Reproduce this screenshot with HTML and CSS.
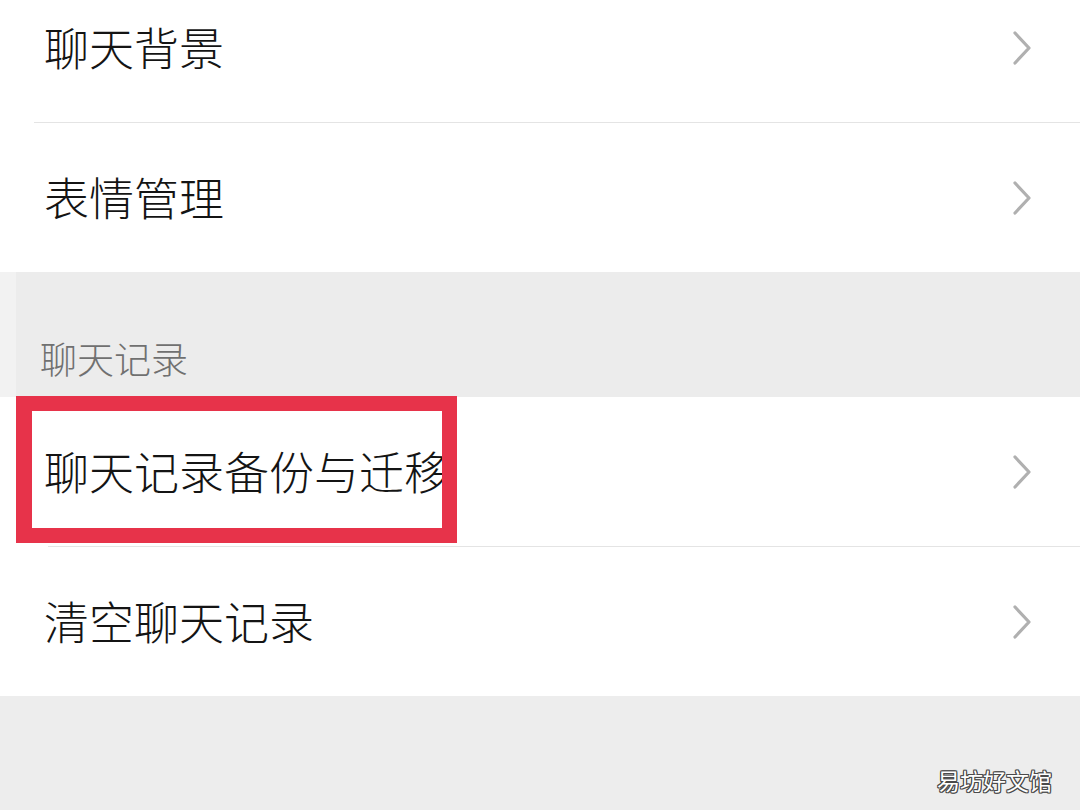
FILE: index.html
```html
<!DOCTYPE html>
<html lang="zh-CN">
<head>
<meta charset="utf-8">
<title>聊天设置</title>
<link rel="stylesheet" href="styles.css">
</head>
<body>
<div class="page">
  <div class="group first">
    <div class="row">
      <span class="label">聊天背景</span>
      <svg class="chev" width="20" height="36" viewBox="0 0 20 36"><polyline points="3,3 17,18 3,33" fill="none" stroke="#b0b0b0" stroke-width="3.2" stroke-linecap="round" stroke-linejoin="round"/></svg>
    </div>
    <div class="divider"></div>
    <div class="row">
      <span class="label">表情管理</span>
      <svg class="chev" width="20" height="36" viewBox="0 0 20 36"><polyline points="3,3 17,18 3,33" fill="none" stroke="#b0b0b0" stroke-width="3.2" stroke-linecap="round" stroke-linejoin="round"/></svg>
    </div>
  </div>
  <div class="section-head">聊天记录</div>
  <div class="group">
    <div class="row highlighted">
      <span class="label">聊天记录备份与迁移</span>
      <svg class="chev" width="20" height="36" viewBox="0 0 20 36"><polyline points="3,3 17,18 3,33" fill="none" stroke="#b0b0b0" stroke-width="3.2" stroke-linecap="round" stroke-linejoin="round"/></svg>
      <div class="redbox"></div>
    </div>
    <div class="divider d2"></div>
    <div class="row">
      <span class="label">清空聊天记录</span>
      <svg class="chev" width="20" height="36" viewBox="0 0 20 36"><polyline points="3,3 17,18 3,33" fill="none" stroke="#b0b0b0" stroke-width="3.2" stroke-linecap="round" stroke-linejoin="round"/></svg>
    </div>
  </div>
  <div class="footer">
    <span class="watermark">易坊好文馆</span>
  </div>
</div>
</body>
</html>
```
FILE: styles.css
```css
html, body {
  margin: 0;
  padding: 0;
  background: #ededed;
}
body {
  width: 1080px;
  height: 810px;
  overflow: hidden;
  font-family: "Noto Sans CJK SC", "Noto Sans", sans-serif;
}
.page {
  display: flex;
  flex-direction: column;
}
.group {
  background: #ffffff;
}
.group.first {
  margin-top: -27px;
}
.row {
  position: relative;
  height: 149px;
  display: flex;
  align-items: center;
  justify-content: space-between;
  padding: 0 48px 0 44px;
}
.label {
  font-size: 45px;
  font-weight: 300;
  color: #141414;
  line-height: 1;
  position: relative;
  top: -1px;
}
.chev {
  flex: none;
}
.divider {
  height: 1px;
  margin-left: 34px;
  background: #e4e4e4;
}
.divider.d2 {
  margin-left: 48px;
}
.section-head {
  height: 125px;
  box-sizing: border-box;
  padding: 0 0 20px 40px;
  display: flex;
  align-items: flex-end;
  font-size: 37px;
  font-weight: 300;
  color: #707070;
  line-height: 1;
  background: linear-gradient(to right, #f2f2f2 0, #f2f2f2 16px, #ececec 16px);
}
.redbox {
  position: absolute;
  left: 16px;
  top: -1px;
  width: 410px;
  height: 117px;
  border: 15px solid #e7334a;
  border-left-width: 16px;
  pointer-events: none;
}
.footer {
  height: 114px;
  display: flex;
  justify-content: flex-end;
  align-items: flex-end;
  padding: 0 28px 18px 0;
  box-sizing: border-box;
}
.watermark {
  font-size: 23px;
  color: #ffffff;
  line-height: 1;
  text-shadow: 1px 0 0 #4a4a4a, -1px 0 0 #4a4a4a, 0 1px 0 #4a4a4a, 0 -1px 0 #4a4a4a, 1px 1px 0 #4a4a4a, -1px -1px 0 #4a4a4a, 1px -1px 0 #4a4a4a, -1px 1px 0 #4a4a4a;
}
```
